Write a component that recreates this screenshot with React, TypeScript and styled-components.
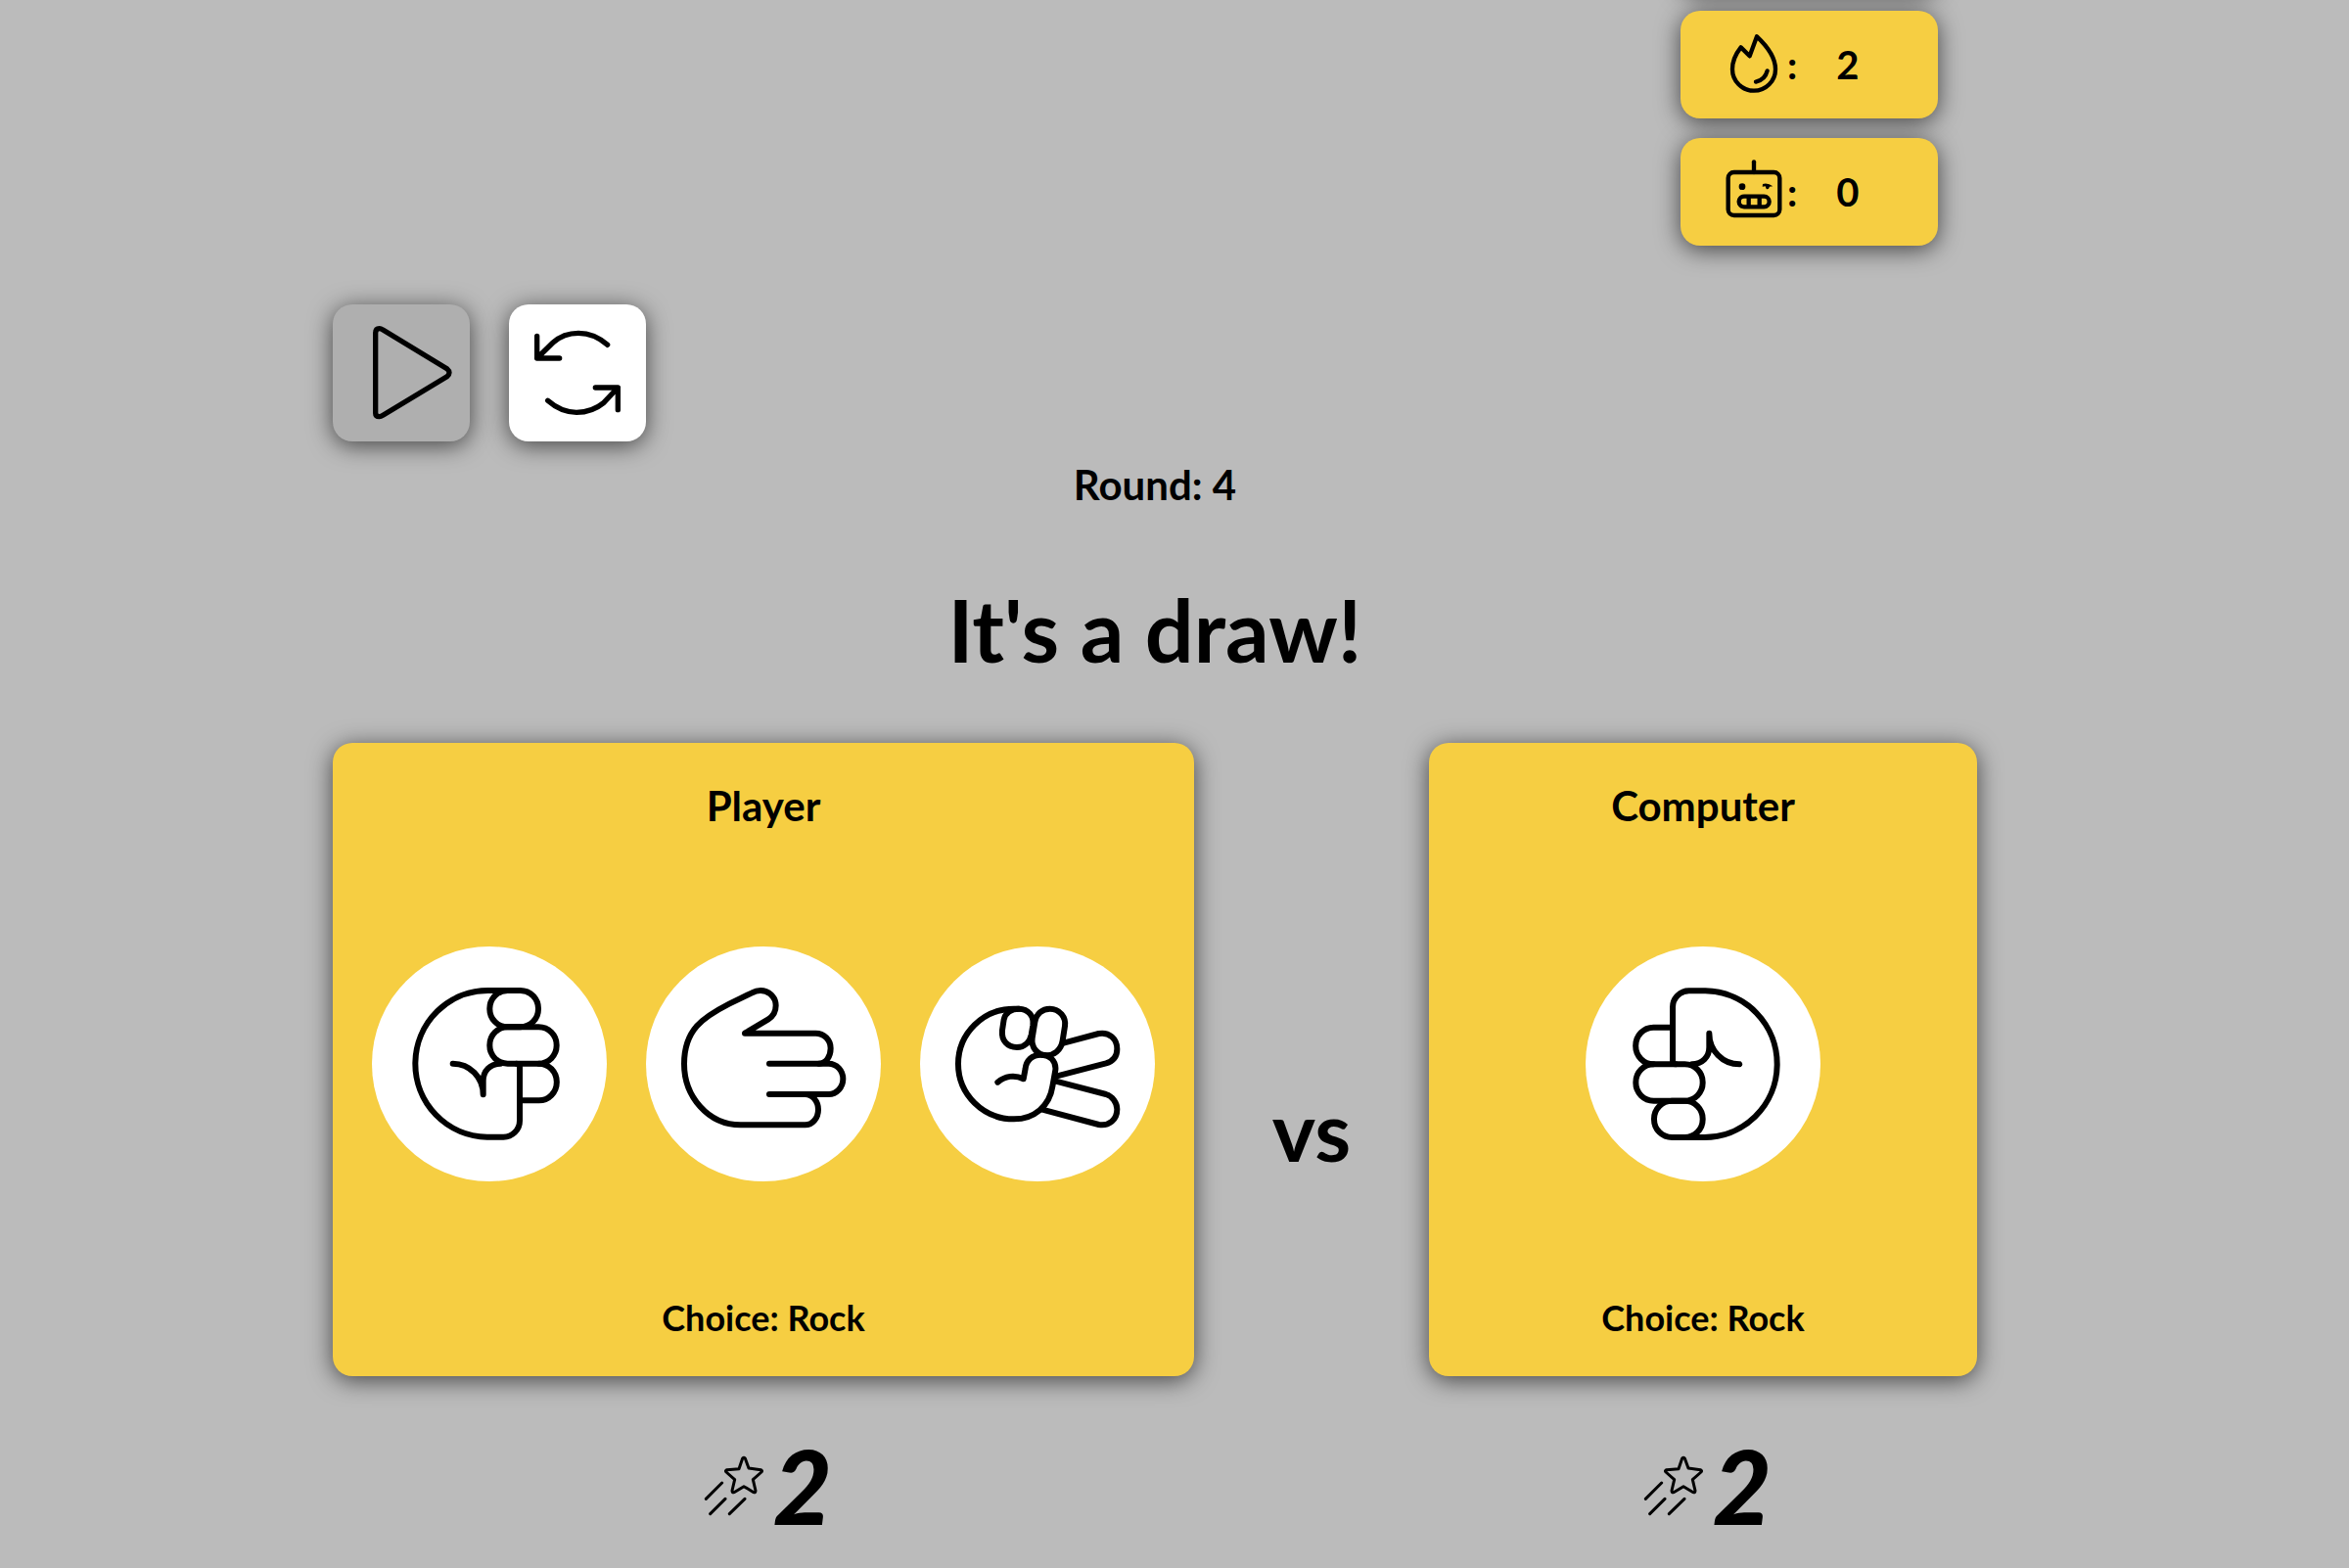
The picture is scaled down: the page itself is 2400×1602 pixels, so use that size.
import React from "react";
import styled, { createGlobalStyle, css } from "styled-components";

const GlobalStyle = createGlobalStyle`
  * { box-sizing: border-box; }
  body {
    margin: 0;
    background: #bbbbbb;
    color: #000;
    font-family: Lato, "Open Sans", sans-serif;
    font-weight: 700;
    overflow: hidden;
  }
  h1, h2, p { margin: 0; }
`;

const raised = css`
  border-radius: 20px;
  box-shadow: 0 4px 24px rgba(0, 0, 0, 0.64);
`;

const Shell = styled.div`
  display: flow-root;
`;

const Page = styled.main`
  display: flex;
  flex-direction: column;
  width: 70%;
  margin: -119px 0 0 calc(15% - 20px);
`;

const Scoreboard = styled.section`
  display: flex;
  flex-direction: column;
  align-self: flex-end;
  gap: 20px;
  margin-right: 40px;
`;

const ScoreTile = styled.div`
  ${raised}
  display: flex;
  align-items: center;
  width: 263px;
  height: 110px;
  padding-left: 43px;
  background: #f6ce42;
  font-size: 40px;
  line-height: 48px;
`;

const Colon = styled.span`
  margin-left: 2px;
`;

const ScoreValue = styled.span`
  margin-left: 40px;
`;

const Controls = styled.div`
  display: flex;
  gap: 40px;
  margin-top: 60px;
`;

const ControlButton = styled.button`
  ${raised}
  width: 140px;
  height: 140px;
  padding: 0;
  border: 0;
  background: #ffffff;
  cursor: pointer;

  &:disabled {
    background: #afafaf;
    cursor: default;
  }
`;

const Round = styled.p`
  margin-top: 20px;
  text-align: center;
  font-size: 42px;
  line-height: 48px;
`;

const Result = styled.h1`
  margin-top: 76px;
  text-align: center;
  font-size: 88px;
  line-height: 96px;
`;

const Arena = styled.section`
  display: grid;
  grid-template-columns: 11fr 3fr 7fr;
  align-items: center;
  margin-top: 68px;
`;

const Side = styled.div`
  display: flex;
  flex-direction: column;
  gap: 56px;
`;

const Card = styled.article`
  ${raised}
  display: flex;
  flex-direction: column;
  align-items: center;
  justify-content: space-between;
  min-height: 647px;
  padding: 40px;
  background: #f6ce42;
`;

const CardTitle = styled.h2`
  font-size: 42px;
  line-height: 48px;
`;

const Choice = styled.p`
  font-size: 36px;
  line-height: 40px;
`;

const Hands = styled.div`
  display: flex;
  gap: 40px;
`;

const disc = css`
  display: block;
  width: 240px;
  height: 240px;
  padding: 0;
  border: 0;
  border-radius: 50%;
  background: #ffffff;
`;

const HandButton = styled.button`
  ${disc}
  cursor: pointer;
`;

const HandDisc = styled.div`
  ${disc}
`;

const Versus = styled.p`
  padding-bottom: 24px;
  text-align: center;
  font-size: 84px;
  line-height: 96px;
`;

const Tally = styled.p`
  display: flex;
  align-items: center;
  justify-content: center;
  gap: 8px;
  padding-left: 8px;
  font-size: 104px;
  font-style: italic;
  font-weight: 900;
  line-height: 112px;
`;

const Icon = styled.svg<{ $size: number }>`
  display: block;
  flex: none;
  width: ${(p) => p.$size}px;
  height: ${(p) => p.$size}px;
  overflow: visible;
  fill: none;
  stroke: #000;
  stroke-linecap: round;
  stroke-linejoin: round;
`;

const FlameIcon = () => (
  <Icon $size={64} viewBox="240 102 192 192" strokeWidth={13} aria-hidden="true">
    <path d="M345 112C375 140 402 172 402 212A66 66 0 0 1 270 212C270 185 280 165 296 145L323 172Z" />
    <path d="M377 217Q370 245 342 251" />
  </Icon>
);

const RobotIcon = () => (
  <Icon $size={64} viewBox="240 492 192 192" strokeWidth={13} aria-hidden="true">
    <path d="M336 496V528" />
    <rect x="257" y="528" width="158" height="132" rx="18" />
    <circle cx="300" cy="572" r="10" fill="#000" stroke="none" />
    <path d="M363 564Q378 559 394 571L384 572Q381 582 374 579L371 571L362 572Z" fill="#000" stroke="none" />
    <rect x="290" y="602" width="93" height="32" rx="16" />
    <path d="M320 602V634M353 602V634" strokeLinecap="butt" />
  </Icon>
);

const PlayIcon = () => (
  <Icon $size={140} viewBox="0 0 420 420" strokeWidth={16} aria-hidden="true">
    <path d="M131 88Q131 74 143 74Q147 74 155 79L350 197Q364 209 350 221L155 339Q147 344 143 344Q131 344 131 333Z" />
  </Icon>
);

const ReplayIcon = () => (
  <Icon $size={140} viewBox="0 0 420 420" strokeWidth={16} aria-hidden="true">
    <path d="M86 97V165H155M86 165L135 117Q167 88 213 88Q262 88 302 124" />
    <path d="M119 295Q160 331 207 331Q255 331 290 302L334 255M265 255H334V323" />
  </Icon>
);

const RockIcon = ({ mirrored = false }: { mirrored?: boolean }) => (
  <Icon $size={240} viewBox="30 51 720 720" strokeWidth={18} aria-hidden="true">
    <g transform={mirrored ? "rotate(180 390 411)" : undefined}>
      <path d="M440 186H389A223 224.500 0 0 0 383 635H432A50 50 0 0 0 483 585V420Q483 410 473 410" />
      <rect x="391" y="186" width="149" height="112" rx="55" />
      <rect x="391" y="298" width="205" height="112" rx="55" />
      <path d="M542 410A54 56 0 0 1 542 523H487" />
      <path d="M278 410C330 410 371 452 371 505V462C371 432 393 410 424 410" />
    </g>
  </Icon>
);

const PaperIcon = () => (
  <Icon $size={240} viewBox="30 51 720 720" strokeWidth={18} aria-hidden="true">
    <path d="M408 410H590A44 47 0 0 1 590 504H408" />
    <path d="M560 410C582 410 596 388 596 363C596 338 576 317 550 317H333L405 274C423 263 428 248 428 232C428 205 405 186 381 186C371 186 362 189 355 193L285 227C205 268 147 306 147 411C147 510 220 598 320 598H518C540 598 558 577 558 551C558 525 540 504 518 504" />
  </Icon>
);

const ScissorsIcon = () => (
  <Icon $size={240} viewBox="30 51 720 720" strokeWidth={18} aria-hidden="true">
    <path d="M333 242H318A171 169 0 0 0 318 580C380 580 427 540 436 480L445 430C448 402 428 383 400 383C374 383 356 400 353 425L347 457C320 443 290 448 268 467" />
    <path d="M333 242C362 242 380 265 376 293L371 322C366 345 350 360 327 360C298 360 279 340 282 308L287 275C291 255 310 242 333 242Z" />
    <path d="M428 242C458 242 478 268 474 295L467 340C462 370 440 385 418 385C390 385 370 360 374 332L382 283C386 257 405 242 428 242Z" />
    <path d="M470 347L578 318C610 312 634 335 634 365C634 388 620 403 600 409L450 448" />
    <path d="M446 464L600 504C620 510 634 530 634 550C634 582 610 602 578 597L405 551" />
  </Icon>
);

const ShootingStarIcon = () => (
  <Icon $size={64} viewBox="240 507 192 192" strokeWidth={9} aria-hidden="true">
    <path d="M362 519Q366 515 370 519L381 549L418 554Q424 557 420 561L394 584L402 618Q402 625 396 623L366 605L336 623Q330 625 330 618L338 584L312 561Q308 557 314 554L351 551Z" />
    <path d="M299 594L250 643M309 643L263 689M369 643L322 689" />
  </Icon>
);

export default function App() {
  return (
    <>
      <GlobalStyle />
      <Shell>
        <Page>
          <Scoreboard aria-label="Score">
            <ScoreTile />
            <ScoreTile>
              <FlameIcon />
              <Colon>:</Colon>
              <ScoreValue>2</ScoreValue>
            </ScoreTile>
            <ScoreTile>
              <RobotIcon />
              <Colon>:</Colon>
              <ScoreValue>0</ScoreValue>
            </ScoreTile>
          </Scoreboard>

          <Controls>
            <ControlButton type="button" aria-label="Play" disabled>
              <PlayIcon />
            </ControlButton>
            <ControlButton type="button" aria-label="Restart">
              <ReplayIcon />
            </ControlButton>
          </Controls>

          <Round>Round: 4</Round>
          <Result>It's a draw!</Result>

          <Arena>
            <Side>
              <Card>
                <CardTitle>Player</CardTitle>
                <Hands>
                  <HandButton type="button" aria-label="Rock">
                    <RockIcon />
                  </HandButton>
                  <HandButton type="button" aria-label="Paper">
                    <PaperIcon />
                  </HandButton>
                  <HandButton type="button" aria-label="Scissors">
                    <ScissorsIcon />
                  </HandButton>
                </Hands>
                <Choice>Choice: Rock</Choice>
              </Card>
              <Tally>
                <ShootingStarIcon />2
              </Tally>
            </Side>

            <Versus>vs</Versus>

            <Side>
              <Card>
                <CardTitle>Computer</CardTitle>
                <HandDisc>
                  <RockIcon mirrored />
                </HandDisc>
                <Choice>Choice: Rock</Choice>
              </Card>
              <Tally>
                <ShootingStarIcon />2
              </Tally>
            </Side>
          </Arena>
        </Page>
      </Shell>
    </>
  );
}
